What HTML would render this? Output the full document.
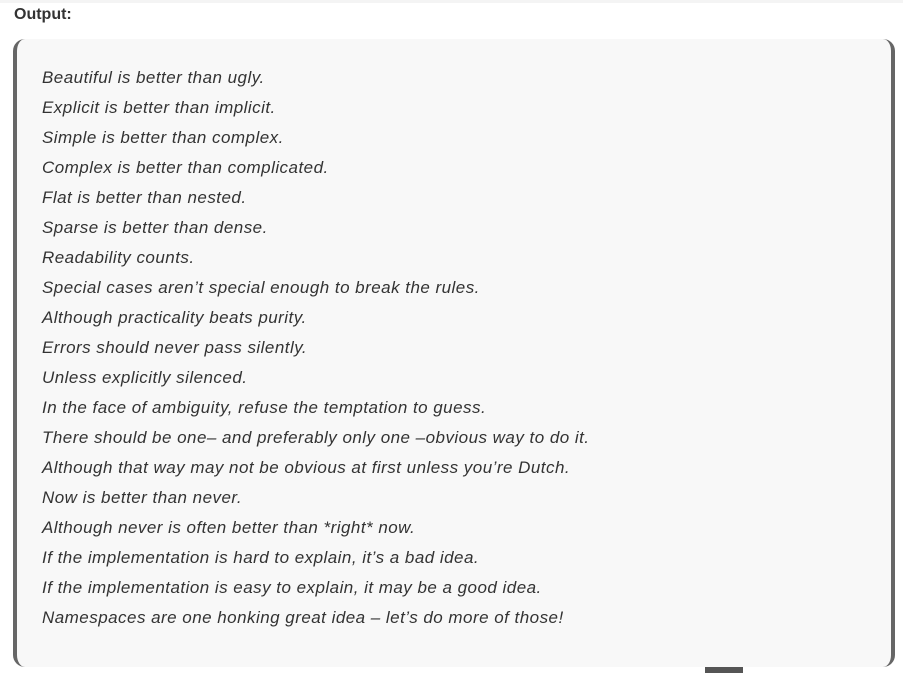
<!DOCTYPE html>
<html><head><style>
body{margin:0;width:903px;height:673px;background:#fff;overflow:hidden;font-family:"Liberation Sans","DejaVu Sans",sans-serif;position:relative}
.top{position:absolute;left:0;top:0;width:903px;height:3px;background:#f4f4f4}
h{position:absolute;left:14px;top:6px;font-weight:bold;font-size:16px;color:#333}
.box{position:absolute;left:13px;top:39px;width:874px;height:628px;background:#f8f8f8;border-left:4px solid #666;border-right:4px solid #666;border-radius:12px}
.t{position:absolute;left:42px;top:63px;font-style:italic;font-size:17px;color:#333;line-height:30px;letter-spacing:0.47px}
.bar{position:absolute;left:705px;top:667px;width:38px;height:6px;background:#555}
</style></head><body>
<div class="top"></div>
<h>Output:</h>
<div class="box"></div>
<div class="t">Beautiful is better than ugly.<br>Explicit is better than implicit.<br>Simple is better than complex.<br>Complex is better than complicated.<br>Flat is better than nested.<br>Sparse is better than dense.<br>Readability counts.<br>Special cases aren’t special enough to break the rules.<br>Although practicality beats purity.<br>Errors should never pass silently.<br>Unless explicitly silenced.<br>In the face of ambiguity, refuse the temptation to guess.<br>There should be one– and preferably only one –obvious way to do it.<br>Although that way may not be obvious at first unless you’re Dutch.<br>Now is better than never.<br>Although never is often better than *right* now.<br>If the implementation is hard to explain, it’s a bad idea.<br>If the implementation is easy to explain, it may be a good idea.<br>Namespaces are one honking great idea – let’s do more of those!</div>
<div class="bar"></div>
</body></html>
